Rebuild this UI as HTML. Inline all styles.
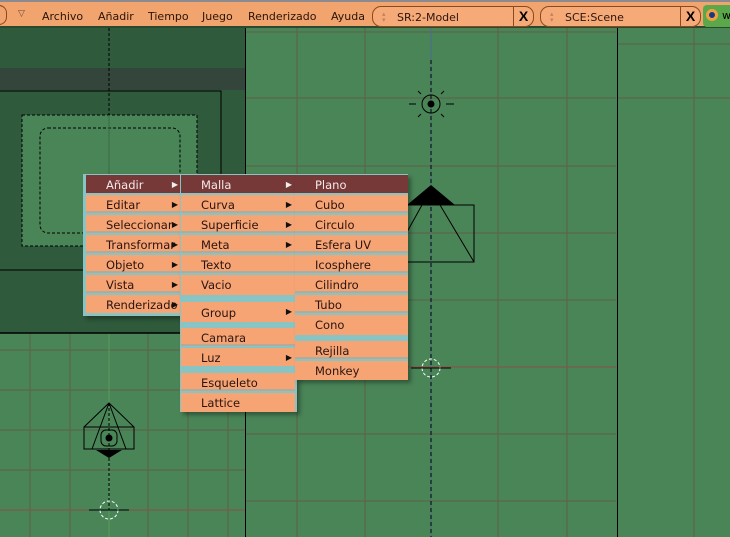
<!DOCTYPE html>
<html><head><meta charset="utf-8"><style>
*{margin:0;padding:0;box-sizing:border-box}
body{width:730px;height:537px;overflow:hidden;background:#4a8558;position:relative;font-family:"DejaVu Sans","Liberation Sans",sans-serif;font-size:11px;color:#2a1410}
.abs{position:absolute}
.hdr{left:0;top:0;width:730px;height:28px;background:#f2a46e;border-top:2px solid #8a8a90;border-bottom:2px solid #2a4a30}
.hdr span.m{position:absolute;top:8px;font-size:11px;color:#2a1408}
.fld{position:absolute;top:4px;height:21px;border:1px solid #8a4a20;border-radius:9px;background:#f6aa78}
.fld .t{position:absolute;left:24px;top:4px;font-size:11px}
.fld .x{position:absolute;right:0;top:0;width:20px;height:19px;border-left:1px solid #8a4a20;font-weight:bold;font-size:14px;text-align:center;line-height:19px;color:#000;font-family:"Liberation Sans",sans-serif}
.fld .ud{position:absolute;left:9px;top:4px;font-size:7px;color:#c08060;line-height:6px}
.menu{position:absolute;background:#88c4c4;box-shadow:3px 3px 4px rgba(0,0,0,.35)}
.it{position:absolute;height:18px;background:#f6a474;line-height:21px;padding-left:20px;border-bottom:2px solid #b4aa9a;font-size:11.5px}
.it.h{background:#773838;color:#f4e8e8;border-bottom-color:#773838}
.ar{position:absolute;right:3px;top:0;font-size:8px;color:#111;line-height:20px}
.h .ar{color:#eee}
</style></head><body>
<svg class="abs" style="left:0;top:0" width="730" height="537">
<g stroke="#5e6048" stroke-width="1">
<line x1="245" y1="32" x2="616" y2="32"/><line x1="245" y1="98" x2="616" y2="98"/><line x1="245" y1="166" x2="616" y2="166"/><line x1="245" y1="233" x2="616" y2="233"/><line x1="245" y1="300" x2="616" y2="300"/><line x1="245" y1="434" x2="616" y2="434"/><line x1="245" y1="501" x2="616" y2="501"/>
<line x1="297" y1="28" x2="297" y2="537"/><line x1="365" y1="28" x2="365" y2="537"/><line x1="498" y1="28" x2="498" y2="537"/><line x1="567" y1="28" x2="567" y2="537"/>
<line x1="617" y1="44" x2="730" y2="44"/><line x1="617" y1="98" x2="730" y2="98"/><line x1="694" y1="28" x2="694" y2="537"/>
<line x1="0" y1="350" x2="245" y2="350"/><line x1="0" y1="390" x2="245" y2="390"/><line x1="0" y1="430" x2="245" y2="430"/><line x1="0" y1="470" x2="245" y2="470"/>
<line x1="30" y1="333" x2="30" y2="537"/><line x1="70" y1="333" x2="70" y2="537"/><line x1="148" y1="333" x2="148" y2="537"/><line x1="188" y1="333" x2="188" y2="537"/><line x1="228" y1="333" x2="228" y2="537"/>
</g>
<line x1="245" y1="367" x2="616" y2="367" stroke="#8a5048"/>
<line x1="0" y1="510" x2="245" y2="510" stroke="#8a5048"/>
<line x1="109" y1="333" x2="109" y2="537" stroke="#5a9a5a"/>
<line x1="431" y1="28" x2="431" y2="537" stroke="#4a6a90"/>
<line x1="431" y1="60" x2="431" y2="537" stroke="#000" stroke-dasharray="4,3"/>
<rect x="0" y="28" width="245" height="305" fill="#2f5a3c"/>
<rect x="0" y="68" width="245" height="22" fill="#34463c"/>
<polyline points="0,91 221,91 221,270 0,270" fill="none" stroke="#000"/>
<rect x="22" y="115" width="175" height="131" fill="#4a8558" stroke="#000" stroke-dasharray="3,2"/>
<rect x="40" y="128" width="140" height="105" rx="8" fill="none" stroke="#000" stroke-dasharray="3,2"/>
<line x1="109" y1="28" x2="109" y2="115" stroke="#000" stroke-dasharray="3,2"/>
<line x1="109" y1="115" x2="109" y2="246" stroke="#3a6a44"/>
<line x1="0" y1="333" x2="245" y2="333" stroke="#000" stroke-width="1.5"/>
<line x1="245.5" y1="28" x2="245.5" y2="537" stroke="#000" stroke-width="1"/>
<line x1="617.5" y1="28" x2="617.5" y2="537" stroke="#000" stroke-width="1"/>
<circle cx="431" cy="104" r="9" fill="none" stroke="#000"/><circle cx="431" cy="104" r="3.5" fill="#000"/>
<g stroke="#000"><line x1="409" y1="104" x2="416" y2="104"/><line x1="446" y1="104" x2="454" y2="104"/><line x1="418" y1="91" x2="421" y2="94"/><line x1="444" y1="91" x2="441" y2="94"/><line x1="418" y1="117" x2="421" y2="114"/><line x1="444" y1="117" x2="441" y2="114"/></g>
<polygon points="431,185 455,205 407,205" fill="#000"/>
<polyline points="407,205 474,205 474,262 407,262" fill="none" stroke="#000"/>
<line x1="422" y1="205" x2="407" y2="232" stroke="#000"/><line x1="440" y1="205" x2="474" y2="262" stroke="#000"/>
<circle cx="431" cy="368" r="9" fill="none" stroke="#fff" stroke-dasharray="3,2"/>
<line x1="411" y1="368" x2="451" y2="368" stroke="#000"/>
<polygon points="109,403 134,427 134,449 84,449 84,427" fill="none" stroke="#000"/>
<line x1="84" y1="427" x2="134" y2="427" stroke="#000"/>
<line x1="109" y1="403" x2="92" y2="449" stroke="#000"/><line x1="109" y1="403" x2="126" y2="449" stroke="#000"/>
<rect x="101" y="430" width="16" height="16" rx="5" fill="none" stroke="#000"/><circle cx="109" cy="438" r="3.5" fill="#000"/>
<polygon points="96,450 122,450 109,458" fill="#000"/>
<line x1="109" y1="403" x2="109" y2="510" stroke="#000" stroke-dasharray="3,2"/>
<circle cx="109" cy="510" r="9" fill="none" stroke="#fff" stroke-dasharray="3,2"/>
<line x1="89" y1="510" x2="129" y2="510" stroke="#000"/>
</svg>

<div class="abs hdr">
<div class="abs" style="left:-10px;top:3px;width:17px;height:20px;border:1px solid #8a4a20;border-radius:8px"></div>
<span class="m" style="left:18px;top:7px;font-size:9px;color:#6a4a3a">▽</span>
<span class="m" style="left:42px">Archivo</span>
<span class="m" style="left:98px">Añadir</span>
<span class="m" style="left:148px">Tiempo</span>
<span class="m" style="left:202px">Juego</span>
<span class="m" style="left:248px">Renderizado</span>
<span class="m" style="left:331px">Ayuda</span>
<div class="fld" style="left:372px;width:162px"><span class="ud">▴<br>▾</span><span class="t">SR:2-Model</span><span class="x">X</span></div>
<div class="fld" style="left:540px;width:161px"><span class="ud">▴<br>▾</span><span class="t">SCE:Scene</span><span class="x">X</span></div>
<div class="abs" style="left:703px;top:3px;width:27px;height:22px;background:#5aa84a;border-radius:4px 0 0 4px"><span style="position:absolute;left:3px;top:4px;width:12px;height:12px;border-radius:50%;background:#1a3a80;border:3px solid #f0a040"></span><span style="position:absolute;left:19px;top:4px;color:#000">w</span></div>
</div>

<div class="menu" style="left:83px;top:174px;width:100px;height:142px">
<div class="it h" style="left:3px;top:1px;width:95px">Añadir<span class="ar">▶</span></div>
<div class="it" style="left:3px;top:21px;width:95px">Editar<span class="ar">▶</span></div>
<div class="it" style="left:3px;top:41px;width:95px">Seleccionar<span class="ar">▶</span></div>
<div class="it" style="left:3px;top:61px;width:95px">Transformar<span class="ar">▶</span></div>
<div class="it" style="left:3px;top:81px;width:95px">Objeto<span class="ar">▶</span></div>
<div class="it" style="left:3px;top:101px;width:95px">Vista<span class="ar">▶</span></div>
<div class="it" style="left:3px;top:121px;width:95px;border-bottom:none">Renderizado<span class="ar">▶</span></div>
</div>

<div class="menu" style="left:180px;top:174px;width:117px;height:238px">
<div class="it h" style="left:1px;top:1px;width:114px">Malla<span class="ar">▶</span></div>
<div class="it" style="left:1px;top:21px;width:114px">Curva<span class="ar">▶</span></div>
<div class="it" style="left:1px;top:41px;width:114px">Superficie<span class="ar">▶</span></div>
<div class="it" style="left:1px;top:61px;width:114px">Meta<span class="ar">▶</span></div>
<div class="it" style="left:1px;top:81px;width:114px">Texto</div>
<div class="it" style="left:1px;top:101px;width:114px;height:20px;border:none">Vacio</div>
<div class="it" style="left:1px;top:128px;width:114px;height:20px;border:none;line-height:22px">Group<span class="ar">▶</span></div>
<div class="it" style="left:1px;top:154px;width:114px">Camara</div>
<div class="it" style="left:1px;top:174px;width:114px;border:none">Luz<span class="ar">▶</span></div>
<div class="it" style="left:1px;top:199px;width:114px">Esqueleto</div>
<div class="it" style="left:1px;top:219px;width:114px;height:19px;border:none">Lattice</div>
</div>

<div class="menu" style="left:295px;top:174px;width:113px;height:206px">
<div class="it h" style="left:0;top:1px;width:113px">Plano</div>
<div class="it" style="left:0;top:21px;width:113px">Cubo</div>
<div class="it" style="left:0;top:41px;width:113px">Circulo</div>
<div class="it" style="left:0;top:61px;width:113px">Esfera UV</div>
<div class="it" style="left:0;top:81px;width:113px">Icosphere</div>
<div class="it" style="left:0;top:101px;width:113px">Cilindro</div>
<div class="it" style="left:0;top:121px;width:113px">Tubo</div>
<div class="it" style="left:0;top:141px;width:113px;height:20px;border:none">Cono</div>
<div class="it" style="left:0;top:167px;width:113px">Rejilla</div>
<div class="it" style="left:0;top:187px;width:113px;height:19px;border:none">Monkey</div>
</div>
</body></html>
